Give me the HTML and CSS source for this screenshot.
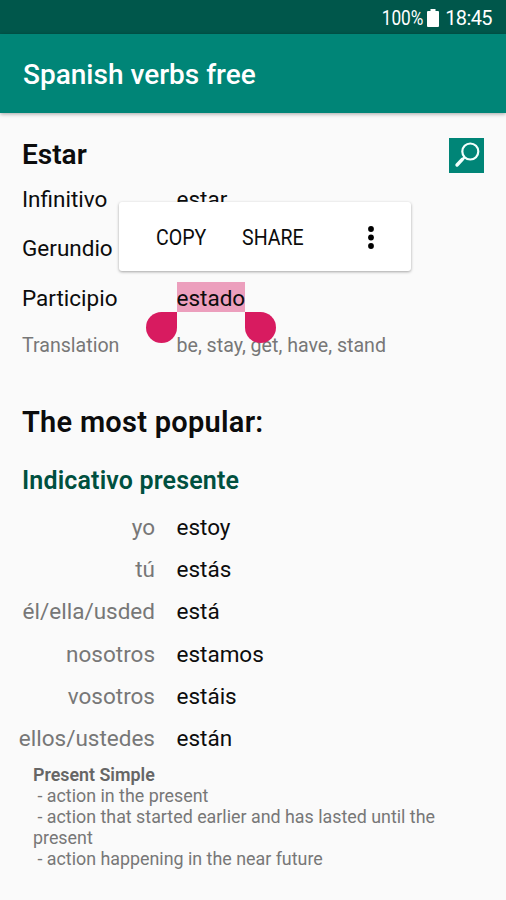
FILE: index.html
```html
<!DOCTYPE html>
<html lang="en">
<head>
<meta charset="utf-8">
<title>Spanish verbs free</title>
<link rel="stylesheet" href="styles.css">
</head>
<body>
<div class="status">
  <span class="percent">100%</span>
  <svg class="battery" width="12" height="18" viewBox="0 0 12 18"><path d="M3.500 0h5v2H11q1 0 1 1v14q0 1-1 1H1q-1 0-1-1V3q0-1 1-1h2.500z" fill="#fff"/></svg>
  <span class="clock">18:45</span>
</div>
<header class="appbar"><h1>Spanish verbs free</h1></header>
<main>
  <div class="verb-head">
    <h2>Estar</h2>
    <button class="search" aria-label="Search">
      <svg width="35" height="35" viewBox="0 0 35 35" fill="none" stroke="#f2fffc"><circle cx="21.300" cy="13.500" r="8" stroke-width="2.200"/><path d="M15.600 19.200L13.700 21.300" stroke-width="2.200"/><path d="M13.500 21.200L8 27" stroke-width="3.400" stroke-linecap="round"/></svg>
    </button>
  </div>
  <dl class="forms">
    <dt>Infinitivo</dt><dd>estar</dd>
    <dt>Gerundio</dt><dd></dd>
    <dt>Participio</dt>
    <dd><span class="selected">estado<i class="handle start"></i><i class="handle end"></i></span></dd>
    <dt class="muted">Translation</dt><dd class="muted">be, stay, get, have, stand</dd>
  </dl>
  <h2 class="popular">The most popular:</h2>
  <h3>Indicativo presente</h3>
  <dl class="conjugation">
    <dt>yo</dt><dd>estoy</dd>
    <dt>tú</dt><dd>estás</dd>
    <dt>él/ella/usded</dt><dd>está</dd>
    <dt>nosotros</dt><dd>estamos</dd>
    <dt>vosotros</dt><dd>estáis</dd>
    <dt>ellos/ustedes</dt><dd>están</dd>
  </dl>
  <div class="notes"><b>Present Simple</b>
 - action in the present
 - action that started earlier and has lasted until the present
 - action happening in the near future</div>
</main>
<div class="popup">
  <span class="copy">COPY</span><span class="share">SHARE</span>
  <svg width="8" height="24" viewBox="0 0 8 24"><circle cx="4" cy="3" r="2.900"/><circle cx="4" cy="11.500" r="2.900"/><circle cx="4" cy="20" r="2.900"/></svg>
</div>
</body>
</html>
```
FILE: styles.css
```css
* { box-sizing: border-box; margin: 0; padding: 0; }
body {
  position: relative;
  width: 506px;
  height: 900px;
  overflow: hidden;
  background: #fafafa;
  color: #0c0c0c;
  font-family: Roboto, "Liberation Sans", sans-serif;
}
.status {
  height: 34px;
  background: #00574b;
  color: #fff;
  display: flex;
  align-items: center;
  justify-content: flex-end;
  padding: 2px 14px 0 0;
  font-size: 20px;
}
.percent { transform: scaleX(.86); transform-origin: right; margin-right: 4px; }
.battery { margin-right: 6px; }
.clock { letter-spacing: -0.6px; }
.appbar {
  height: 79px;
  background: #008577;
  color: #fff;
  padding-left: 23px;
  box-shadow: 0 1px 4px rgba(0, 0, 0, .35);
}
h1 { font-size: 28px; font-weight: 500; line-height: 82px; }
main { padding-left: 22px; }
.verb-head { display: flex; justify-content: space-between; height: 61px; padding: 24px 22px 0 0; }
h2 { font-size: 28px; font-weight: 600; line-height: 35px; }
.search { width: 35px; height: 35px; margin-top: 1px; border: 0; background: #008577; }
.search svg { display: block; }
.forms {
  display: grid;
  grid-template-columns: 154.500px 1fr;
  grid-template-rows: 49px 50px 49px 46px;
  font-size: 22.500px;
  line-height: 51px;
}
.muted { color: #777; font-size: 19.600px; line-height: 48px; }
.selected {
  position: relative;
  display: inline-block;
  height: 30px;
  line-height: 32px;
  background: #ec9fbd;
}
.handle { position: absolute; top: 30px; width: 31px; height: 31px; background: #d81b60; }
.start { right: 100%; border-radius: 50% 0 50% 50%; }
.end { left: 100%; border-radius: 0 50% 50% 50%; }
.popular { margin-top: 37px; font-size: 29px; line-height: 34px; letter-spacing: .27px; }
h3 { margin-top: 26px; font-size: 25px; font-weight: 600; line-height: 32px; color: #00503f; letter-spacing: .15px; }
.conjugation {
  display: grid;
  grid-template-columns: 137px 1fr;
  column-gap: 21.500px;
  grid-auto-rows: 42.200px;
  margin: 9px 0 0 -4px;
  font-size: 22.500px;
  line-height: 42px;
}
.conjugation dt { color: #777; text-align: right; }
.notes { margin: 4.800px 0 0 11px; width: 420px; font-size: 17.850px; line-height: 21px; color: #777; white-space: pre-wrap; }
.notes b { font-weight: 600; color: #666; }
.popup {
  position: absolute;
  left: 119px;
  top: 202px;
  width: 292px;
  height: 69px;
  display: flex;
  align-items: center;
  padding: 2px 0 0 37px;
  background: #fff;
  border-radius: 3px;
  box-shadow: 0 1px 3px rgba(0, 0, 0, .35);
  font-size: 22px;
}
.copy, .share { transform: scaleX(.89); transform-origin: left; }
.copy { width: 86px; }
.share { width: 125px; }
```
